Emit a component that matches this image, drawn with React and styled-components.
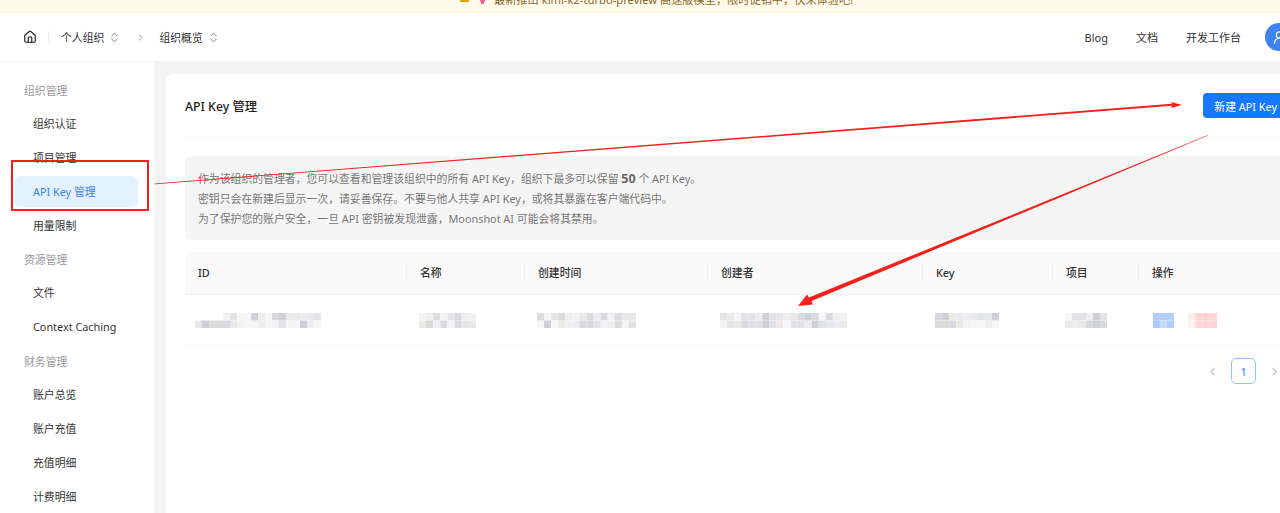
import React from 'react';
import styled, {createGlobalStyle} from 'styled-components';
import {ChevronLeft, ChevronRight, ChevronsUpDown, House, UserRound} from 'lucide-react';

const menu = [
  {title: '组织管理', items: ['组织认证', '项目管理', 'API Key 管理', '用量限制']},
  {title: '资源管理', items: ['文件', 'Context Caching']},
  {title: '财务管理', items: ['账户总览', '账户充值', '充值明细', '计费明细']},
];

const columns = ['ID', '名称', '创建时间', '创建者', 'Key', '项目', '操作'];

const greys = ['#eeeef0', '#e2e3e6', '#f3f3f3', '#d9dade', '#ebe9e6', '#e6e8ea', '#dcdbdc', '#f6f6f6', '#cfd0d5'];

const greyTiles = (cols, seed) => {
  const rows = [[], []];
  let n = seed * 17 + 3;
  for (let y = 0; y < 2; y++) {
    for (let x = 0; x < cols; x++) {
      n = (n * 31 + 11) % 101;
      rows[y].push(greys[n % greys.length]);
    }
  }
  return rows;
};

const idTiles = greyTiles(18, 1);
idTiles[0][0] = idTiles[0][1] = idTiles[0][2] = idTiles[0][3] = '#fff';

const blueTiles = [
  ['#b4cdfd', '#b4cdfd', '#b6cffd'],
  ['#aec9fd', '#c6dbfe', '#b4cdfd'],
];
const redTiles = [
  ['#ffefec', '#ffd6d6', '#ffd0d1', '#ffd6d6'],
  ['#fff1ef', '#ffd5d6', '#ffd5d6', '#ffd6d6'],
];

// blurred cell contents, two rows of tiles
const Mosaic = ({width, tiles}) => {
  const tileWidth = width / tiles[0].length;
  return (
    <svg width={width} height="15" viewBox={`0 0 ${width} 15`}>
      {tiles.map((row, y) =>
        row.map((fill, x) => (
          <rect key={`${x}-${y}`} x={x * tileWidth} y={y * 7.5} width={tileWidth} height="7.5" fill={fill} />
        )),
      )}
    </svg>
  );
};

const App = () => {
  return (
    <Page>
      <GlobalStyle />
      <Banner>
        <BannerIcon viewBox="0 0 9 6" $drop={5}>
          <rect width="9" height="6" rx="1" fill="#e8a010" />
        </BannerIcon>
        <BannerIcon viewBox="0 0 9 6" $drop={3}>
          <path d="M1 0h7L5.5 6h-2z" fill="#f0608a" />
        </BannerIcon>
        <BannerText>最新推出 kimi-k2-turbo-preview 高速版模型，限时促销中，快来体验吧!</BannerText>
      </Banner>
      <Header>
        <Crumbs>
          <House size={14} strokeWidth={2} color="#222" />
          <CrumbDivider />
          <Crumb>
            个人组织
            <ChevronsUpDown size={13} strokeWidth={1.5} color="#666" />
          </Crumb>
          <CrumbArrow size={11} strokeWidth={1.5} color="#777" />
          <Crumb>
            组织概览
            <ChevronsUpDown size={13} strokeWidth={1.5} color="#666" />
          </Crumb>
        </Crumbs>
        <HeaderNav>
          <NavLink>Blog</NavLink>
          <NavLink>文档</NavLink>
          <NavLink>开发工作台</NavLink>
          <Avatar>
            <UserRound size={15} color="#fff" />
          </Avatar>
        </HeaderNav>
      </Header>
      <Body>
        <Sidebar>
          {menu.map((group) => (
            <React.Fragment key={group.title}>
              <GroupTitle>{group.title}</GroupTitle>
              {group.items.map((item) => (
                <MenuItem key={item} $active={item === 'API Key 管理'}>
                  {item}
                </MenuItem>
              ))}
            </React.Fragment>
          ))}
        </Sidebar>
        <Main>
          <Card>
            <CardHead>
              <CardTitle>API Key 管理</CardTitle>
              <PrimaryButton>新建 API Key</PrimaryButton>
            </CardHead>
            <Notice>
              <p>
                作为该组织的管理者，您可以查看和管理该组织中的所有 API Key，组织下最多可以保留 <b>50</b> 个 API Key。
              </p>
              <p>密钥只会在新建后显示一次，请妥善保存。不要与他人共享 API Key，或将其暴露在客户端代码中。</p>
              <p>为了保护您的账户安全，一旦 API 密钥被发现泄露，Moonshot AI 可能会将其禁用。</p>
            </Notice>
            <TableHead>
              {columns.map((col) => (
                <HeadCell key={col}>{col}</HeadCell>
              ))}
            </TableHead>
            <TableRow>
              <Cell><Mosaic width={126} tiles={idTiles} /></Cell>
              <Cell><Mosaic width={57} tiles={greyTiles(8, 2)} /></Cell>
              <Cell><Mosaic width={99} tiles={greyTiles(14, 3)} /></Cell>
              <Cell><Mosaic width={127} tiles={greyTiles(18, 4)} /></Cell>
              <Cell><Mosaic width={64} tiles={greyTiles(9, 5)} /></Cell>
              <Cell><Mosaic width={42} tiles={greyTiles(6, 6)} /></Cell>
              <ActionCell>
                <Mosaic width={21} tiles={blueTiles} />
                <Mosaic width={29} tiles={redTiles} />
              </ActionCell>
            </TableRow>
            <Pagination>
              <ChevronLeft size={13} color="#c4c4c4" />
              <PageButton>1</PageButton>
              <ChevronRight size={13} color="#c4c4c4" />
            </Pagination>
          </Card>
        </Main>
      </Body>
      <RedBox />
      <Annotations viewBox="0 0 1280 513">
        <polygon points="155,183.4 1172,103.8 1171,102 1182,105 1171,108 1172,105.8 155,184.2" fill="#f5201a" />
        <polygon points="1208,135 809,297.5 807,294.5 798,306 813,304.5 811.5,301 1208,135.6" fill="#f5201a" />
      </Annotations>
    </Page>
  );
};

export default App;

const GlobalStyle = createGlobalStyle`
  html, body {
    margin: 0;
    height: 100%;
    overflow: hidden;
    background: #fff;
  }
  p {
    margin: 0;
  }
`;

const Page = styled.div`
  position: relative;
  width: 1320px;
  height: 513px;
  overflow: hidden;
  display: flex;
  flex-direction: column;
  font-family: "Noto Sans", "Noto Sans CJK SC", sans-serif;
  font-size: 10.85px;
  color: #333;
`;

const Banner = styled.div`
  height: 13px;
  flex-shrink: 0;
  box-sizing: border-box;
  padding: 0 0 5px 460px;
  display: flex;
  align-items: flex-end;
  gap: 9px;
  background: #fffaea;
  border-bottom: 1px solid #fff6d6;
`;

const BannerIcon = styled.svg`
  width: 9px;
  height: 6px;
  flex-shrink: 0;
  margin-bottom: ${(props) => props.$drop}px;
`;

const BannerText = styled.span`
  margin-left: -2px;
  line-height: 14px;
  font-size: 11.2px;
  color: #8a6a2a;
  white-space: nowrap;
`;

const Header = styled.header`
  height: 49px;
  flex-shrink: 0;
  box-sizing: border-box;
  padding: 0 27px 0 23px;
  display: flex;
  align-items: center;
  justify-content: space-between;
  background: #fff;
  border-bottom: 1px solid #f2f2f2;
`;

const Crumbs = styled.div`
  display: flex;
  align-items: center;
  gap: 11px;
  color: #333;
`;

const CrumbDivider = styled.span`
  width: 1px;
  height: 13px;
  margin-right: 1px;
  background: #eee;
`;

const Crumb = styled.span`
  display: flex;
  align-items: center;
  gap: 4px;
`;

const CrumbArrow = styled(ChevronRight)`
  margin: 0 2px 0 3px;
`;

const HeaderNav = styled.nav`
  display: flex;
  align-items: center;
  gap: 28px;
`;

const NavLink = styled.a`
  font-size: 11px;
  color: #333;
`;

const Avatar = styled.div`
  width: 28px;
  height: 28px;
  margin-left: -4px;
  border-radius: 50%;
  background: #3f83f2;
  display: flex;
  align-items: center;
  justify-content: center;
`;

const Body = styled.div`
  flex: 1;
  display: flex;
  min-height: 0;
`;

const Sidebar = styled.aside`
  width: 154px;
  flex-shrink: 0;
  box-sizing: border-box;
  padding-top: 10.6px;
  display: flex;
  flex-direction: column;
  background: #fff;
`;

const GroupTitle = styled.div`
  height: 33.9px;
  flex-shrink: 0;
  line-height: 35px;
  padding-left: 24px;
  color: #999;
`;

const MenuItem = styled.div`
  height: 31px;
  flex-shrink: 0;
  line-height: 31px;
  margin: 1.45px 16px 1.45px 14px;
  padding-left: 19px;
  border-radius: 6px;
  color: ${(props) => (props.$active ? '#3b82f6' : '#333')};
  background: ${(props) => (props.$active ? '#e3f2ff' : 'transparent')};
`;

const Main = styled.main`
  flex: 1;
  padding: 12px 13px 0 12px;
  background: #f3f3f3;
  min-width: 0;
`;

const Card = styled.section`
  height: 100%;
  box-sizing: border-box;
  padding: 0 19px;
  background: #fff;
  border-radius: 8px 8px 0 0;
`;

const CardHead = styled.div`
  height: 64px;
  box-sizing: border-box;
  display: flex;
  align-items: center;
  justify-content: space-between;
  border-bottom: 1px solid #f7f7f7;
`;

const CardTitle = styled.h2`
  margin: 0;
  font-size: 12.3px;
  font-weight: 500;
  color: #222;
`;

const PrimaryButton = styled.button`
  height: 25px;
  padding: 0 11px;
  border: none;
  border-radius: 4px;
  background: #1677ff;
  color: #fff;
  font: inherit;
`;

const Notice = styled.div`
  margin-top: 18px;
  height: 84px;
  box-sizing: border-box;
  padding: 13px;
  border-radius: 6px;
  background: #f5f5f5;
  color: #777;
  line-height: 20px;

  b {
    font-size: 12.5px;
    font-weight: 700;
    color: #666;
  }
`;

const rowGrid = `
  display: grid;
  grid-template-columns: 221px 118px 183px 215px 130px 86px 1fr;
`;

const TableHead = styled.div`
  ${rowGrid}
  height: 43px;
  margin-top: 12px;
  align-items: center;
  background: #fafafa;
  border-bottom: 1px solid #f2f2f2;
  box-sizing: border-box;
  border-radius: 6px 6px 0 0;
`;

const HeadCell = styled.div`
  padding-left: 13px;
  height: 18px;
  line-height: 18px;
  font-weight: 500;
  color: #333;
  border-left: 1px solid #f0f0f0;

  &:first-child {
    border-left: none;
  }
`;

const TableRow = styled.div`
  ${rowGrid}
  height: 51px;
  box-sizing: border-box;
  padding-top: 1px;
  align-items: center;
  border-bottom: 1px solid #f5f5f5;
`;

const Cell = styled.div`
  display: flex;
  padding-left: 13px;

  &:first-child {
    padding-left: 10px;
  }
`;

const ActionCell = styled(Cell)`
  gap: 14px;
  padding-left: 15px;
`;

const Pagination = styled.div`
  margin-top: 12px;
  padding-right: 7px;
  display: flex;
  align-items: center;
  justify-content: flex-end;
  gap: 12px;
`;

const PageButton = styled.div`
  width: 25px;
  height: 26px;
  box-sizing: border-box;
  border: 1px solid #8fc0ff;
  border-radius: 5px;
  color: #1677ff;
  display: flex;
  align-items: center;
  justify-content: center;
`;

const RedBox = styled.div`
  position: absolute;
  left: 11px;
  top: 160px;
  width: 138px;
  height: 51px;
  box-sizing: border-box;
  border: 2px solid #f5201a;
`;

const Annotations = styled.svg`
  position: absolute;
  left: 0;
  top: 0;
  width: 1280px;
  height: 513px;
  pointer-events: none;
`;
